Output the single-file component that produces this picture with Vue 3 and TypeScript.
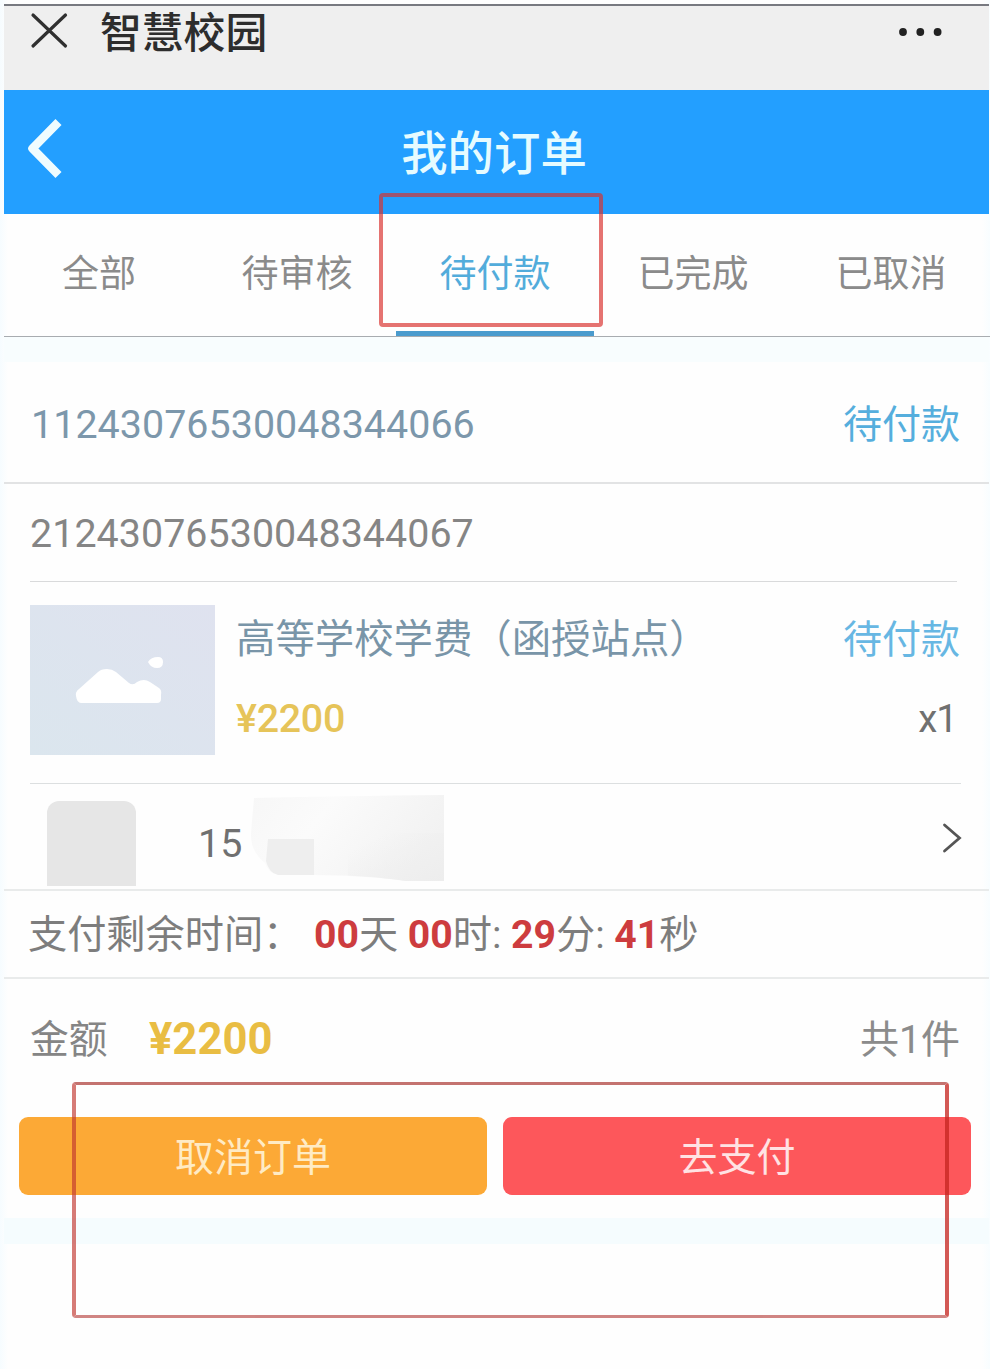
<script setup lang="ts">
import { ref } from 'vue'

interface Tab {
  key: string
  label: string
}

interface TimePart {
  value: string
  unit: string
}

const tabs: Tab[] = [
  { key: 'all', label: '全部' },
  { key: 'review', label: '待审核' },
  { key: 'unpaid', label: '待付款' },
  { key: 'done', label: '已完成' },
  { key: 'cancelled', label: '已取消' },
]
const activeTab = ref<string>('unpaid')

const countdown: TimePart[] = [
  { value: '00', unit: '天' },
  { value: '00', unit: '时:' },
  { value: '29', unit: '分:' },
  { value: '41', unit: '秒' },
]
</script>

<template>
  <div class="page">
    <header class="statusbar">
      <svg class="close" width="38" height="38" viewBox="0 0 38 38">
        <path d="M3 3 L35.5 34 M35.5 3 L3 34" />
      </svg>
      <span class="app-name">智慧校园</span>
      <svg class="more" width="44" height="10" viewBox="0 0 44 10">
        <circle cx="5" cy="5" r="3.9" />
        <circle cx="22.3" cy="5" r="3.9" />
        <circle cx="39.6" cy="5" r="3.9" />
      </svg>
    </header>

    <nav class="navbar">
      <svg class="back" width="40" height="64" viewBox="0 0 40 64">
        <path d="M34.5 6 L8.5 32.5 L34.5 59" />
      </svg>
      <h1 class="title">我的订单</h1>
    </nav>

    <div class="tabs">
      <button
        v-for="tab in tabs"
        :key="tab.key"
        class="tab"
        :class="{ active: tab.key === activeTab }"
        @click="activeTab = tab.key"
      >
        {{ tab.label }}
      </button>
    </div>

    <div class="gap gap-top"></div>

    <main class="order">
      <div class="row order-no">
        <span class="number main">11243076530048344066</span>
        <span class="status">待付款</span>
      </div>

      <div class="row sub-no"><span class="number">21243076530048344067</span></div>

      <div class="product">
        <svg class="thumb" width="185" height="150" viewBox="0 0 185 150">
          <defs>
            <linearGradient id="thumb-bg" x1="1" y1="0" x2="0" y2="1">
              <stop offset="0" stop-color="#dfe2ef" />
              <stop offset="1" stop-color="#dbe6ee" />
            </linearGradient>
          </defs>
          <rect width="185" height="150" fill="url(#thumb-bg)" />
          <path
            fill="#fff"
            d="M46 91 Q45 87 49 84 L68 67 Q71 64 77 64 Q82 64 86 67 L99 78 Q103 81 107 77 Q114 73 120 77 L129 83 Q132 85 131 90 L131 94 Q131 98 127 98 L51 98 Q47 98 46 91 Z"
          />
          <path fill="#fff" d="M118 57 Q121 52 128 52 Q133 52 133 57 Q133 63 127 63 Q121 63 118 57 Z" />
        </svg>
        <div class="info">
          <div class="line">
            <span class="name">高等学校学费（函授站点）</span>
            <span class="status light">待付款</span>
          </div>
          <div class="line second">
            <span class="price">¥2200</span>
            <span class="qty">x1</span>
          </div>
        </div>
      </div>

      <div class="contact">
        <div class="avatar"></div>
        <span class="phone">15</span>
        <svg class="mask" width="200" height="92" viewBox="0 0 200 92">
          <defs>
            <linearGradient id="mask-bg" x1="0" y1="0" x2="1" y2=".35">
              <stop offset="0" stop-color="#f7f7f7" />
              <stop offset=".4" stop-color="#fbfbfb" />
              <stop offset="1" stop-color="#f2f2f2" />
            </linearGradient>
            <linearGradient id="mask-corner" x1="0" y1="0" x2="1" y2="1">
              <stop offset=".2" stop-color="#eeeeee" stop-opacity="0" />
              <stop offset="1" stop-color="#ededed" />
            </linearGradient>
          </defs>
          <path
            fill="url(#mask-bg)"
            d="M6 5 Q90 3 196 2 L196 88 L158 88 Q120 82 64 82 L26 81 Q20 78 17 70 Q2 58 3 40 Z"
          />
          <path fill="#eeeeee" d="M20 46 H66 V82 H30 Q21 80 18 68 Z" />
          <path fill="url(#mask-corner)" d="M100 40 H196 V88 H158 Q130 84 100 83 Z" />
        </svg>
        <svg class="arrow" width="22" height="32" viewBox="0 0 22 32">
          <path d="M3.5 3 L18.5 16 L3.5 29" />
        </svg>
      </div>

      <div class="timer">
        <span class="timer-label">支付剩余时间：</span>
        <span v-for="(part, i) in countdown" :key="i" class="part"><b>{{ part.value }}</b>{{ part.unit }}</span>
      </div>

      <div class="total">
        <span class="total-label">金额</span>
        <span class="amount">¥2200</span>
        <span class="count">共1件</span>
      </div>

      <div class="actions">
        <button class="btn cancel">取消订单</button>
        <button class="btn pay">去支付</button>
      </div>
    </main>

    <div class="gap gap-bottom"></div>

    <div class="marker marker-tab"></div>
    <div class="marker marker-actions"></div>
  </div>
</template>

<style>
html,
body {
  background: #fdfefe;
}
</style>

<style scoped>
.page {
  position: relative;
  box-sizing: border-box;
  width: 990px;
  height: 1369px;
  padding: 4px 1px 0 4px;
  overflow: hidden;
  background: linear-gradient(90deg, #f6fcff 0, #fefefe 8px, #fefefe 982px, #f8fdff 990px);
  font-family: Roboto, 'Noto Sans CJK SC', sans-serif;
  font-size: 39.4px;
  line-height: 48px;
  color: #858585;
}

.page * {
  box-sizing: border-box;
}

button {
  border: 0;
  padding: 0;
  background: none;
  font: inherit;
  color: inherit;
}

.statusbar {
  display: flex;
  align-items: flex-start;
  height: 86px;
  padding: 0 47px 0 26px;
  border-top: 2px solid #777980;
  background: #efefef;
}

.close {
  margin-top: 6px;
}

.close path {
  fill: none;
  stroke: #303030;
  stroke-width: 3.2;
  stroke-linecap: round;
}

.app-name {
  margin: 4px 0 0 32px;
  font-size: 41.8px;
  font-weight: 500;
  color: #2d2d2d;
}

.more {
  margin: 21px 0 0 auto;
  fill: #222;
}

.navbar {
  display: grid;
  grid-template-columns: 80px 1fr 80px;
  align-items: center;
  height: 124px;
  background: #239fff;
}

.back {
  margin: -8px 0 0 20px;
}

.back path {
  fill: none;
  stroke: #effcff;
  stroke-width: 8.5;
  stroke-linejoin: round;
}

.title {
  margin: 3px 5px 0 0;
  text-align: center;
  font-size: 46.4px;
  font-weight: 500;
  color: #e6fbff;
}

.tabs {
  display: grid;
  grid-template-columns: repeat(5, 198px);
  height: 123px;
  margin-right: -5px;
  border-bottom: 1px solid #a8acb0;
  font-size: 37px;
}

.tab {
  padding-top: 4px;
  border-bottom: 5px solid transparent;
  margin: 0 6px 0 -2px;
  color: #8b8b8b;
}

.tab.active {
  margin: 0 4px 0 -4px;
  border-color: #4a9bcd;
  color: #52acdb;
}

.gap-top {
  height: 25px;
  background: #f8fdfe;
}

.row {
  display: flex;
  align-items: center;
  justify-content: space-between;
}

.order-no {
  height: 122px;
  padding: 5px 29px 0 27px;
  border-bottom: 2px solid #e2e3e4;
}

.number {
  letter-spacing: 0.05px;
}

.number.main {
  color: #7c97ab;
}

.status {
  font-size: 39px;
  color: #55aedd;
}

.status.light {
  color: #67b7e3;
}

.sub-no {
  height: 98px;
  margin: 0 32px 0 26px;
  padding-top: 3px;
  border-bottom: 1px solid #d9dadb;
}

.product {
  display: flex;
  height: 202px;
  margin: 0 28px 0 26px;
  padding-top: 23px;
  border-bottom: 1px solid #dcdfe0;
}

.thumb {
  flex: none;
}

.info {
  flex: 1;
  padding: 11px 0 0 21px;
}

.line {
  display: flex;
  justify-content: space-between;
}

.line .status {
  margin-right: 1px;
}

.second {
  padding: 31px 4px 0 0;
}

.name {
  color: #7995a8;
}

.price {
  color: #e6c459;
  font-weight: 500;
  letter-spacing: -0.3px;
}

.qty {
  font-size: 38.5px;
  color: #707070;
  letter-spacing: -1px;
}

.contact {
  display: flex;
  align-items: flex-start;
  height: 107px;
  padding: 0 26px 0 43px;
  border-bottom: 2px solid #e9ebeb;
}

.avatar {
  width: 89px;
  height: 85px;
  margin-top: 17px;
  border-radius: 12px 12px 0 0;
  background: #e6e6e6;
}

.phone {
  margin: 36px 0 0 62px;
  color: #707070;
}

.mask {
  margin: 9px 0 0 6px;
}

.arrow {
  margin: 38px 0 0 auto;
}

.arrow path {
  fill: none;
  stroke: #555;
  stroke-width: 2.8;
  stroke-linecap: round;
}

.timer {
  display: flex;
  height: 88px;
  padding: 20px 24px 0;
  border-bottom: 2px solid #e9ebeb;
  font-size: 39.2px;
  color: #7d7d7d;
}

.timer-label {
  width: 286px;
}

.part {
  margin-right: 9.6px;
}

.part b {
  font-weight: 700;
  color: #cd3c3e;
}

.total {
  display: flex;
  height: 138px;
  padding: 37px 29px 0 26px;
}

.total-label {
  width: 78px;
  font-size: 38.8px;
}

.amount {
  margin-left: 41px;
  font-size: 43.6px;
  font-weight: 700;
  color: #e9bd43;
}

.count {
  margin-left: auto;
  font-size: 39px;
  color: #8b8b8b;
}

.actions {
  display: grid;
  grid-template-columns: 1fr 1fr;
  gap: 16px;
  padding: 0 18px 0 15px;
}

.btn {
  height: 78px;
  padding-top: 3px;
  border-radius: 9px;
  font-size: 39px;
}

.cancel {
  background: #fca936;
  color: #ffebc4;
}

.pay {
  background: #fd575b;
  color: #ffe2e3;
}

.gap-bottom {
  height: 26px;
  margin-top: 23px;
  background: #f5fcfe;
}

/* Red frames laid over the page to point at the tab and the action buttons. */
.marker {
  position: absolute;
  border: 4px solid rgba(216, 48, 45, 0.68);
  border-radius: 4px;
}

.marker-tab {
  left: 379px;
  top: 193px;
  width: 224px;
  height: 134px;
}

.marker-actions {
  left: 72px;
  top: 1082px;
  width: 877px;
  height: 236px;
  border-color: rgba(174, 62, 58, 0.72) rgba(198, 38, 32, 0.76) rgba(184, 72, 68, 0.66) rgba(194, 56, 50, 0.66);
  border-width: 3px 4px 3px 4px;
}
</style>
